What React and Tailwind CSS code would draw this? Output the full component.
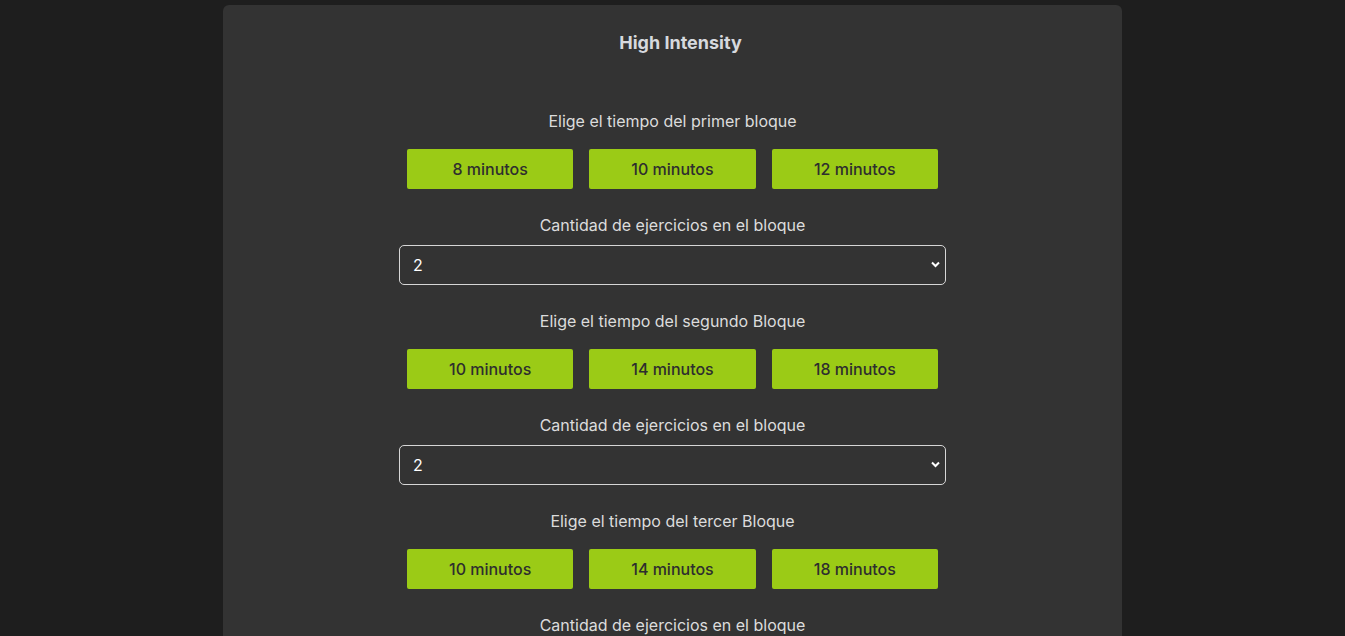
import { useState } from "react";

const blocks = [
  { label: "Elige el tiempo del primer bloque", times: ["8 minutos", "10 minutos", "12 minutos"] },
  { label: "Elige el tiempo del segundo Bloque", times: ["10 minutos", "14 minutos", "18 minutos"] },
  { label: "Elige el tiempo del tercer Bloque", times: ["10 minutos", "14 minutos", "18 minutos"] },
];

function Block({ label, times }) {
  const [count, setCount] = useState("2");

  return (
    <div className="flex flex-col items-center">
      <p className="text-base leading-6 text-[#dcdcdc]">{label}</p>
      <div className="mt-4 flex gap-4 px-2 w-[547px]">
        {times.map((t) => (
          <button
            key={t}
            className="h-10 flex-1 rounded-[2px] bg-[#9bcb16] text-base font-medium text-[#2e2e2e]"
          >
            {t}
          </button>
        ))}
      </div>
      <p className="mt-6 text-base leading-6 text-[#dcdcdc]">Cantidad de ejercicios en el bloque</p>
      <div className="relative mt-2 w-[547px]">
        <select
          value={count}
          onChange={(e) => setCount(e.target.value)}
          className="h-10 w-full appearance-none rounded-[5px] border border-[#d6d6d6] bg-transparent pl-[13px] text-base text-white outline-none"
        >
          <option value="1">1</option>
          <option value="2">2</option>
          <option value="3">3</option>
          <option value="4">4</option>
        </select>
        {/* chevron */}
        <svg
          className="pointer-events-none absolute right-[6px] top-[16px]"
          width="9"
          height="7"
          viewBox="0 0 9 7"
          fill="none"
        >
          <path d="M1 1.5 L4.5 5 L8 1.5" stroke="#ffffff" strokeWidth="2" />
        </svg>
      </div>
    </div>
  );
}

export default function App() {
  return (
    <div
      className="min-h-screen bg-[#1e1e1e] pt-[5px]"
      style={{ fontFamily: "Inter, 'Noto Sans', sans-serif" }}
    >
      <div className="mx-auto w-[899px] rounded-md bg-[#333333] pt-6 pb-10">
        <h1 className="pl-4 text-center text-lg leading-7 font-bold text-[#d6d9de]">High Intensity</h1>
        <div className="mt-[52px] flex flex-col gap-6">
          {blocks.map((b, i) => (
            <Block key={i} {...b} />
          ))}
        </div>
      </div>
    </div>
  );
}
